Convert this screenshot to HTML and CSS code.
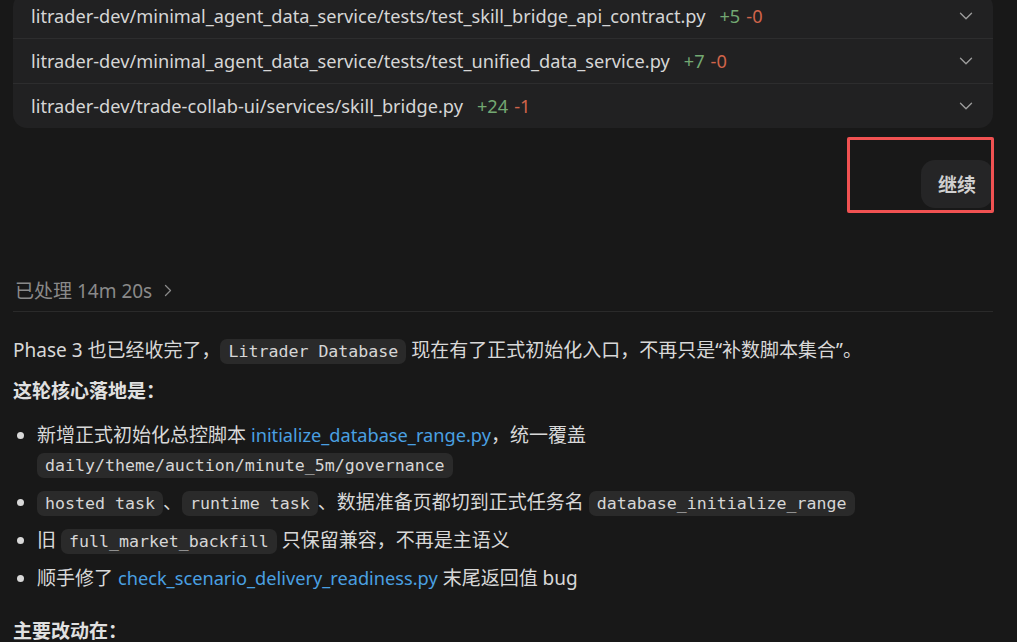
FILE: index.html
```html
<!DOCTYPE html>
<html lang="zh-CN">
<head>
<meta charset="utf-8">
<title>Phase 3</title>
<link rel="stylesheet" href="styles.css">
</head>
<body>
<main class="wrap">
  <section class="files">
    <div class="file-row">
      <span class="path">litrader-dev/minimal_agent_data_service/tests/test_skill_bridge_api_contract.py</span>
      <span class="add">+5</span><span class="del">-0</span>
      <svg class="chev" width="14" height="8" viewBox="0 0 14 8"><path d="M1.5 1.2l5.5 5.5 5.5-5.5" fill="none" stroke="currentColor" stroke-width="1.4" stroke-linecap="round" stroke-linejoin="round"/></svg>
    </div>
    <div class="file-row">
      <span class="path">litrader-dev/minimal_agent_data_service/tests/test_unified_data_service.py</span>
      <span class="add">+7</span><span class="del">-0</span>
      <svg class="chev" width="14" height="8" viewBox="0 0 14 8"><path d="M1.5 1.2l5.5 5.5 5.5-5.5" fill="none" stroke="currentColor" stroke-width="1.4" stroke-linecap="round" stroke-linejoin="round"/></svg>
    </div>
    <div class="file-row">
      <span class="path">litrader-dev/trade-collab-ui/services/skill_bridge.py</span>
      <span class="add">+24</span><span class="del">-1</span>
      <svg class="chev" width="14" height="8" viewBox="0 0 14 8"><path d="M1.5 1.2l5.5 5.5 5.5-5.5" fill="none" stroke="currentColor" stroke-width="1.4" stroke-linecap="round" stroke-linejoin="round"/></svg>
    </div>
  </section>

  <div class="continue-row">
    <div class="bubble">继续</div>
    <div class="highlight"></div>
  </div>

  <div class="processed">
    <span>已处理 14m 20s</span>
    <svg class="pchev" width="8" height="13" viewBox="0 0 8 13"><path d="M1.5 1.5l5 5-5 5" fill="none" stroke="currentColor" stroke-width="1.3" stroke-linecap="round" stroke-linejoin="round"/></svg>
  </div>

  <article class="msg">
    <p>Phase 3 也已经收完了，<code>Litrader Database</code> 现在有了正式初始化入口，不再只是“补数脚本集合”。</p>
    <p class="strong">这轮核心落地是：</p>
    <ul>
      <li>新增正式初始化总控脚本 <a>initialize_database_range.py</a>，统一覆盖 <code>daily/theme/auction/minute_5m/governance</code></li>
      <li><code>hosted task</code>、<code>runtime task</code>、数据准备页都切到正式任务名 <code>database_initialize_range</code></li>
      <li>旧 <code>full_market_backfill</code> 只保留兼容，不再是主语义</li>
      <li>顺手修了 <a>check_scenario_delivery_readiness.py</a> 末尾返回值 bug</li>
    </ul>
    <p class="strong last">主要改动在：</p>
  </article>
</main>
</body>
</html>
```
FILE: styles.css
```css
* { box-sizing: border-box; }
html, body { margin: 0; height: 100%; overflow: hidden; }
body {
  background: #181818;
  color: #d8d8d8;
  font-family: "Noto Sans", "Noto Sans CJK SC", sans-serif;
  font-size: 19px;
}
.wrap { padding: 0 24px 0 13px; }

.files {
  margin-top: -7px;
  background: #212122;
  border-radius: 14px;
  overflow: hidden;
}
.file-row {
  height: 45px;
  display: flex;
  align-items: center;
  padding: 0 20px 0 18px;
  border-top: 1px solid #2d2d2e;
  white-space: nowrap;
  color: #d6d6d6;
  font-size: 18.2px;
}
.file-row:first-child { border-top: none; }
.add { color: #73a872; margin-left: 14px; }
.del { color: #d0644a; margin-left: 6px; }
.chev { margin-left: auto; color: #9a9a9a; }

.continue-row {
  position: relative;
  display: flex;
  justify-content: flex-end;
  margin-top: 32px;
}
.bubble {
  background: #252526;
  border-radius: 14px;
  height: 48px;
  padding: 0 17px;
  display: flex;
  align-items: center;
  font-weight: 700;
  color: #d0d0d0;
}
.highlight {
  position: absolute;
  right: -1px;
  top: -23px;
  width: 147px;
  height: 76px;
  border: 3px solid #f05252;
  border-radius: 2px;
}

.processed {
  margin-top: 70px;
  padding: 0 0 9px 2px;
  display: flex;
  align-items: center;
  gap: 12px;
  color: #8a8a8a;
  border-bottom: 1px solid #2a2a2a;
  height: 34px;
}
.pchev { color: #8a8a8a; }

.msg { padding-top: 24px; }
.msg p { margin: 0; line-height: 29px; }
.msg p.strong { margin-top: 11px; font-weight: 700; color: #e0e0e0; }
.msg p.last { margin-top: 24px; }
code {
  font-family: "DejaVu Sans Mono", monospace;
  font-size: 16.6px;
  background: #2a2a2a;
  border-radius: 7px;
  padding: 3px 8px;
  color: #d6d6d6;
}
a { color: #4aa0e2; font-size: 18.2px; }
ul { margin: 15px 0 0; padding-left: 24px; }
li { line-height: 29px; margin-bottom: 8px; }
li:last-child { margin-bottom: 0; }
li::marker { color: #d8d8d8; }
```
